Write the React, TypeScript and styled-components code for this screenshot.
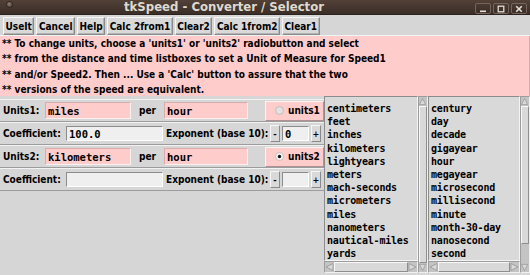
import React from "react";
import styled, { createGlobalStyle, css } from "styled-components";

const Global = createGlobalStyle`
  html, body { margin: 0; padding: 0; background: #d6d6d6; }
  body { width: 530px; height: 275px; overflow: hidden; }
  * { box-sizing: border-box; }
`;

const uiFont = css`
  font-family: "DejaVu Sans Condensed", "DejaVu Sans", sans-serif;
  font-stretch: condensed;
  font-weight: bold;
  font-size: 10px;
  color: #000;
`;

const Window = styled.div`
  width: 530px;
  height: 275px;
  display: flex;
  flex-direction: column;
  background: #d6d6d6;
  overflow: hidden;
`;

const TitleBar = styled.div`
  height: 15px;
  flex: none;
  display: flex;
  align-items: flex-start;
  background: linear-gradient(#514137, #3b2e27);
  border-bottom: 1px solid #2c221d;
`;

const MenuDot = styled.span`
  flex: none;
  width: 7px;
  height: 7px;
  margin: 1px 0 0 6px;
  border-radius: 50%;
  background: radial-gradient(circle at 40% 35%, #8c7d73, #4d3f36);
  border: 1px solid #2f2520;
`;

const Title = styled.div`
  flex: 1;
  text-align: center;
  font-family: "DejaVu Sans Condensed", "DejaVu Sans", sans-serif;
  font-stretch: condensed;
  font-weight: bold;
  font-size: 13px;
  line-height: 13px;
  color: #dfd9cf;
  padding-right: 20px;
  white-space: nowrap;
`;

const WinButtons = styled.div`
  display: flex;
  gap: 2px;
  margin: 3px 3px 0 20px;
`;

const WinButton = styled.span`
  width: 16px;
  height: 11px;
  border: 1px solid #75655a;
  border-radius: 2px;
  background: linear-gradient(#4a3b32, #3a2e27);
  display: flex;
  align-items: center;
  justify-content: center;
`;

const Toolbar = styled.div`
  height: 21px;
  flex: none;
  display: flex;
  align-items: flex-start;
  gap: 2px;
  padding: 2px 3px 0;
  border-bottom: 1px solid #f4f4f4;
`;

const ToolButton = styled.button`
  ${uiFont};
  height: 18px;
  padding: 0 1.5px;
  margin: 0;
  background: #d9d9d9;
  border: 1px solid;
  border-color: #f6f6f6 #8a8a8a #8a8a8a #f6f6f6;
  box-shadow: inset -1px -1px 0 #b4b4b4;
  line-height: 15px;
`;

const Message = styled.div`
  ${uiFont};
  height: 60px;
  flex: none;
  background: #ffcccc;
  border-right: 1px solid #d8a8a8;
  padding: 0 0 0 2px;
  line-height: 15.3px;
  white-space: pre;
`;

const Main = styled.div`
  flex: 1;
  display: flex;
  min-height: 0;
`;

const LeftPane = styled.div`
  width: 324px;
  flex: none;
  display: flex;
  flex-direction: column;
  padding-top: 3px;
`;

const Row = styled.div<{ $h: number }>`
  height: ${(p) => p.$h}px;
  flex: none;
  display: flex;
  align-items: center;
  padding: 0 2px 0 3px;
  border-top: 1px solid #f2f2f2;
  border-bottom: 1px solid #9c9c9c;
`;

const Label = styled.span<{ $w?: number; $center?: boolean }>`
  ${uiFont};
  flex: none;
  white-space: pre;
  ${(p) => (p.$w ? `width: ${p.$w}px;` : "")}
  ${(p) => (p.$center ? "text-align: center;" : "")}
`;

const Entry = styled.div<{ $w: number; $pink?: boolean; $h?: number }>`
  font-family: "DejaVu Sans Mono", monospace;
  font-weight: bold;
  font-size: 10.5px;
  color: #000;
  flex: none;
  width: ${(p) => p.$w}px;
  height: ${(p) => p.$h ?? 17}px;
  background: ${(p) => (p.$pink ? "#ffcccc" : "#efefef")};
  border: 1px solid;
  border-color: ${(p) =>
    p.$pink ? "#d9adad #fff0f0 #fff0f0 #d9adad" : "#8c8c8c #ffffff #ffffff #8c8c8c"};
  padding: 0 2px;
  display: flex;
  align-items: center;
  white-space: pre;
`;

const Spacer = styled.span<{ $w: number }>`
  flex: none;
  width: ${(p) => p.$w}px;
`;

const RadioBox = styled.div`
  ${uiFont};
  flex: none;
  width: 59px;
  height: 20px;
  background: #ffcccc;
  border: 1px solid;
  border-color: #fff2f2 #b09090 #b09090 #fff2f2;
  display: flex;
  align-items: center;
  gap: 4px;
  padding-left: 9px;
`;

const SmallButton = styled.div`
  ${uiFont};
  flex: none;
  width: 10px;
  height: 17px;
  background: #d9d9d9;
  border: 1px solid;
  border-color: #f6f6f6 #8a8a8a #8a8a8a #f6f6f6;
  display: flex;
  align-items: center;
  justify-content: center;
  font-size: 9px;
`;

const Lists = styled.div`
  flex: 1;
  display: flex;
`;

const ListFrame = styled.div<{ $w: number }>`
  width: ${(p) => p.$w}px;
  flex: none;
  display: flex;
  height: 177px;
`;

const ListColumn = styled.div`
  flex: 1;
  display: flex;
  flex-direction: column;
  min-width: 0;
`;

const ListBody = styled.div`
  flex: 1;
  background: #d9d9d9;
  border: 1px solid;
  border-color: #8c8c8c #f4f4f4 #f4f4f4 #8c8c8c;
  overflow: hidden;
  padding: 5px 0 0 2px;
`;

const ListItem = styled.div`
  font-family: "DejaVu Sans Mono", monospace;
  font-weight: bold;
  font-size: 10px;
  letter-spacing: -0.2px;
  line-height: 13.2px;
  color: #000;
  white-space: pre;
`;

const HScroll = styled.div`
  height: 12px;
  flex: none;
  display: flex;
  align-items: stretch;
  background: #c4c4c4;
  border: 1px solid;
  border-color: #9c9c9c #f0f0f0 #f0f0f0 #9c9c9c;
`;

const VScroll = styled.div`
  width: 10px;
  flex: none;
  display: flex;
  flex-direction: column;
  background: #c4c4c4;
  border: 1px solid;
  border-color: #9c9c9c #f0f0f0 #f0f0f0 #9c9c9c;
`;

const Thumb = styled.div<{ $grow?: number }>`
  flex: ${(p) => p.$grow ?? 1};
  background: #d9d9d9;
  border: 1px solid;
  border-color: #f8f8f8 #8e8e8e #8e8e8e #f8f8f8;
`;

const Trough = styled.div<{ $grow: number }>`
  flex: ${(p) => p.$grow};
`;

const Arrow = styled.svg`
  flex: none;
  display: block;
`;

const ArrowIcon = ({ dir }: { dir: "up" | "down" | "left" | "right" }) => {
  const pts: Record<string, string> = {
    up: "4,1 7.5,8 0.5,8",
    down: "0.5,1 7.5,1 4,8",
    left: "1,4.5 8,1 8,8",
    right: "1,1 8,4.5 1,8",
  };
  const vertical = dir === "up" || dir === "down";
  return (
    <Arrow width={vertical ? 8 : 9} height={vertical ? 9 : 10} viewBox="0 0 9 9">
      <polygon points={pts[dir]} fill="#d9d9d9" stroke="#9a9a9a" strokeWidth="0.9" />
    </Arrow>
  );
};

const Radio = ({ on }: { on: boolean }) => (
  <svg width="9" height="9" viewBox="0 0 9 9" style={{ flex: "none" }}>
    <circle cx="4.5" cy="4.5" r="4" fill={on ? "#f4f4f4" : "#e2e2e2"} stroke="#c4b0b0" strokeWidth="0.8" />
    {on && <circle cx="4.5" cy="4.5" r="1.7" fill="#111" />}
  </svg>
);

const distances = [
  "centimeters", "feet", "inches", "kilometers", "lightyears", "meters",
  "mach-seconds", "micrometers", "miles", "nanometers", "nautical-miles", "yards",
];
const times = [
  "century", "day", "decade", "gigayear", "hour", "megayear", "microsecond",
  "millisecond", "minute", "month-30-day", "nanosecond", "second",
];

const message = [
  "** To change units, choose a 'units1' or 'units2' radiobutton and select",
  "** from the distance and time listboxes to set a Unit of Measure for Speed1",
  "** and/or Speed2. Then ... Use a 'Calc' button to assure that the two",
  "** versions of the speed are equivalent.",
];

const UnitsRow = ({ label, dist, time, radio, on }: { label: string; dist: string; time: string; radio: string; on: boolean }) => (
  <Row $h={23}>
    <Label $w={42}>{label}</Label>
    <Entry $w={86} $pink>{dist}</Entry>
    <Label $w={33} $center>per</Label>
    <Entry $w={84} $pink>{time}</Entry>
    <Spacer $w={17} />
    <RadioBox>
      <Radio on={on} />
      <span>{radio}</span>
    </RadioBox>
  </Row>
);

const CoefRow = ({ coef, exp }: { coef: string; exp: string }) => (
  <Row $h={23}>
    <Label $w={63}>Coefficient:</Label>
    <Entry $w={97} $h={15}>{coef}</Entry>
    <Spacer $w={3} />
    <Label $w={104}>Exponent (base 10):</Label>
    <SmallButton>-</SmallButton>
    <Spacer $w={2} />
    <Entry $w={27} $h={15}>{exp}</Entry>
    <Spacer $w={2} />
    <SmallButton>+</SmallButton>
  </Row>
);

const ListBox = ({ items, w, thumb }: { items: string[]; w: number; thumb: number }) => (
  <ListFrame $w={w}>
    <ListColumn>
      <ListBody>
        {items.map((it) => (
          <ListItem key={it}>{it}</ListItem>
        ))}
      </ListBody>
      <HScroll>
        <ArrowIcon dir="left" />
        <Thumb />
        <ArrowIcon dir="right" />
      </HScroll>
    </ListColumn>
    <VScroll>
      <ArrowIcon dir="up" />
      <Thumb $grow={thumb} />
      <Trough $grow={1 - thumb} />
      <ArrowIcon dir="down" />
    </VScroll>
  </ListFrame>
);

export default function App() {
  return (
    <>
      <Global />
      <Window>
        <TitleBar>
          <MenuDot />
          <Title>tkSpeed - Converter / Selector</Title>
          <WinButtons>
            <WinButton>
              <svg width="8" height="8" viewBox="0 0 8 8"><rect x="1" y="5.5" width="6" height="1.6" fill="#e4ded6" /></svg>
            </WinButton>
            <WinButton>
              <svg width="8" height="8" viewBox="0 0 8 8"><rect x="1.2" y="1.2" width="5.6" height="5.6" fill="none" stroke="#e4ded6" strokeWidth="1.3" /></svg>
            </WinButton>
            <WinButton>
              <svg width="8" height="8" viewBox="0 0 8 8"><path d="M1.2 1.2 L6.8 6.8 M6.8 1.2 L1.2 6.8" stroke="#e4ded6" strokeWidth="1.6" /></svg>
            </WinButton>
          </WinButtons>
        </TitleBar>
        <Toolbar>
          {["UseIt", "Cancel", "Help", "Calc 2from1", "Clear2", "Calc 1from2", "Clear1"].map((b) => (
            <ToolButton key={b}>{b}</ToolButton>
          ))}
        </Toolbar>
        <Message>{message.join("\n")}</Message>
        <Main>
          <LeftPane>
            <UnitsRow label="Units1:" dist="miles" time="hour" radio="units1" on={false} />
            <CoefRow coef="100.0" exp="0" />
            <UnitsRow label="Units2:" dist="kilometers" time="hour" radio="units2" on={true} />
            <CoefRow coef="" exp="" />
          </LeftPane>
          <Lists>
            <ListBox items={distances} w={104} thumb={1} />
            <ListBox items={times} w={102} thumb={0.88} />
          </Lists>
        </Main>
      </Window>
    </>
  );
}
